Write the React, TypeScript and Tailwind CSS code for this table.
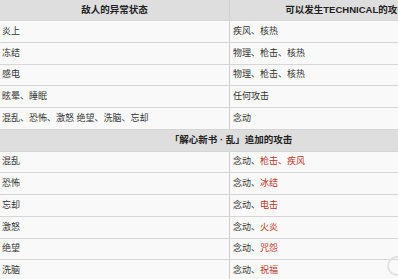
const rows1: [string, string][] = [
  ['炎上', '疾风、核热'],
  ['冻结', '物理、枪击、核热'],
  ['感电', '物理、枪击、核热'],
  ['眩晕、睡眠', '任何攻击'],
  ['混乱、恐怖、激怒 绝望、洗脑、忘却', '念动'],
]

const rows2: [string, string][] = [
  ['混乱', '枪击、疾风'],
  ['恐怖', '冰结'],
  ['忘却', '电击'],
  ['激怒', '火炎'],
  ['绝望', '咒怨'],
  ['洗脑', '祝福'],
]

const h1 = ['h-[22px]', 'h-[22px]', 'h-[21px]', 'h-[22px]', 'h-[22px]']
const h2 = ['h-[21px]', 'h-[22px]', 'h-[22px]', 'h-[22px]', 'h-[21px]', 'h-[22px]']

function Row({ left, right, h }: { left: string; right: React.ReactNode; h: string }) {
  return (
    <div className={`grid grid-cols-[230px_232px] border-t border-[#d6d6d6] bg-[#f9f9f9] ${h}`}>
      <div className="flex items-center pl-[2px] border-r border-[#cfcfcf]">{left}</div>
      <div className="flex items-center pl-[3px]">{right}</div>
    </div>
  )
}

export default function App() {
  return (
    <div
      className="relative w-[398px] h-[279px] overflow-hidden bg-[#f9f9f9] text-[9px] text-[#333]"
      style={{ fontFamily: '"Liberation Sans", "Noto Sans CJK SC", sans-serif' }}
    >
      <div className="w-[462px]">
        {/* header */}
        <div className="grid grid-cols-[230px_232px] h-[20px] bg-[#dedede] font-bold text-[9.5px] text-[#222]">
          <div className="flex items-center justify-center border-r border-[#cfcfcf]">敌人的异常状态</div>
          <div className="flex items-center justify-center whitespace-nowrap">可以发生TECHNICAL的攻击</div>
        </div>

        {rows1.map(([l, r], i) => (
          <Row key={l} left={l} right={r} h={h1[i]} />
        ))}

        {/* section header */}
        <div className="flex items-center justify-center h-[22px] border-t border-[#d6d6d6] bg-[#dedede] font-bold text-[9.5px] text-[#222] whitespace-nowrap">
          「解心新书 · 乱」追加的攻击
        </div>

        {rows2.map(([l, r], i) => (
          <Row
            key={l}
            left={l}
            h={h2[i]}
            right={
              <span>
                念动、<span className="text-[#b8352a]">{r}</span>
              </span>
            }
          />
        ))}
      </div>

      {/* faint floating button at the edge */}
      <div className="absolute left-[387px] top-[256px] w-[20px] h-[20px] rounded-full border-[2px] border-[#e2e2e2]" />
    </div>
  )
}
